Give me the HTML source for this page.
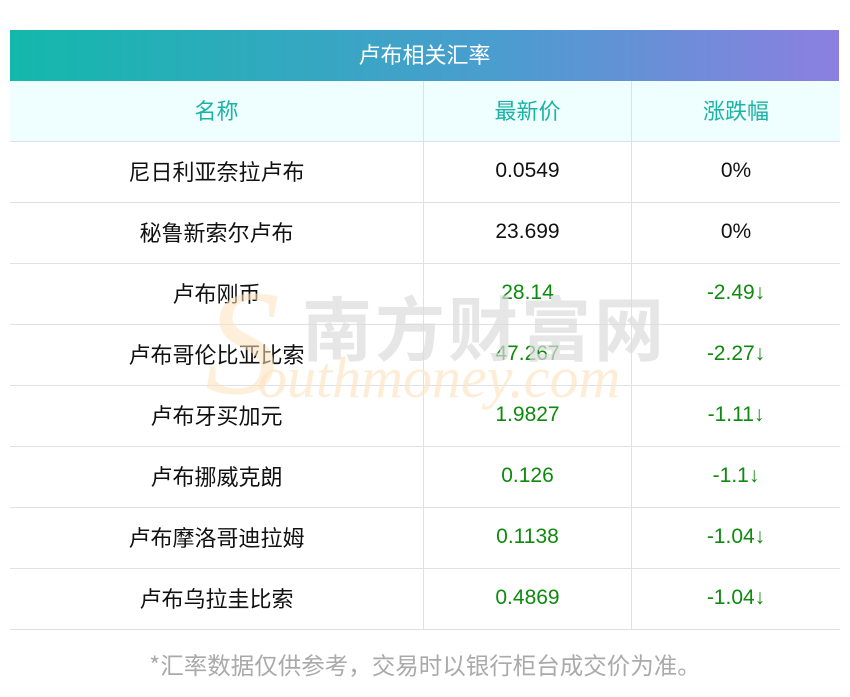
<!DOCTYPE html>
<html><head><meta charset="utf-8"><style>
body{margin:0;background:#fff;width:850px;height:697px;position:relative;overflow:hidden;font-family:"Liberation Sans","Noto Sans CJK SC",sans-serif;}
.title{position:absolute;left:10px;top:30px;width:829px;height:51px;background:linear-gradient(90deg,#13b8ab,#4c9cd0 60%,#8c7fe0);color:#fff;font-size:22px;line-height:48px;text-align:center;font-family:"Noto Sans CJK SC",sans-serif;}
table{position:absolute;left:10px;top:81px;width:830px;border-collapse:collapse;font-size:21px;}
td{height:57px;padding:0 0 3px 0;border:1px solid #dde0ea;text-align:center;color:#111;line-height:1;}
tr:first-child td{background:#effefe;color:#1ab3a6;border-top:none;font-family:"Noto Sans CJK SC",sans-serif;font-size:22px;}
td:first-child{border-left:none;width:413px;font-family:"Noto Sans CJK SC",sans-serif;font-size:22px;}
td:nth-child(2){width:207px}
td:last-child{border-right:none}
.g{color:#0e8a0e}
.foot{position:absolute;left:0;width:850px;top:649px;text-align:center;color:#aaa;font-size:23.5px;font-family:"Noto Sans CJK SC",sans-serif;line-height:30px;}
.wm1{position:absolute;left:302px;top:286px;font-size:70px;line-height:80px;color:#dcdcdc;letter-spacing:3px;opacity:.7;font-family:"Noto Sans CJK SC",sans-serif;font-weight:bold;}
.wm2{position:absolute;left:258px;top:346px;font-size:58px;line-height:64px;color:#fde6c6;font-family:"Liberation Serif",serif;font-style:italic;opacity:.7;}
.wm3{position:absolute;left:205px;top:268px;font-size:150px;line-height:150px;color:#fde2bd;font-family:"Liberation Serif",serif;font-style:italic;opacity:.55;}
</style></head><body>
<div class="title">卢布相关汇率</div>
<table>
<tr><td>名称</td><td>最新价</td><td>涨跌幅</td></tr>
<tr><td>尼日利亚奈拉卢布</td><td>0.0549</td><td>0%</td></tr>
<tr><td>秘鲁新索尔卢布</td><td>23.699</td><td>0%</td></tr>
<tr><td>卢布刚币</td><td class="g">28.14</td><td class="g">-2.49↓</td></tr>
<tr><td>卢布哥伦比亚比索</td><td class="g">47.267</td><td class="g">-2.27↓</td></tr>
<tr><td>卢布牙买加元</td><td class="g">1.9827</td><td class="g">-1.11↓</td></tr>
<tr><td>卢布挪威克朗</td><td class="g">0.126</td><td class="g">-1.1↓</td></tr>
<tr><td>卢布摩洛哥迪拉姆</td><td class="g">0.1138</td><td class="g">-1.04↓</td></tr>
<tr><td>卢布乌拉圭比索</td><td class="g">0.4869</td><td class="g">-1.04↓</td></tr>
</table>
<div class="wm3">S</div>
<div class="wm1">南方财富网</div>
<div class="wm2">outhmoney.com</div>
<div class="foot">*汇率数据仅供参考，交易时以银行柜台成交价为准。</div>
</body></html>
